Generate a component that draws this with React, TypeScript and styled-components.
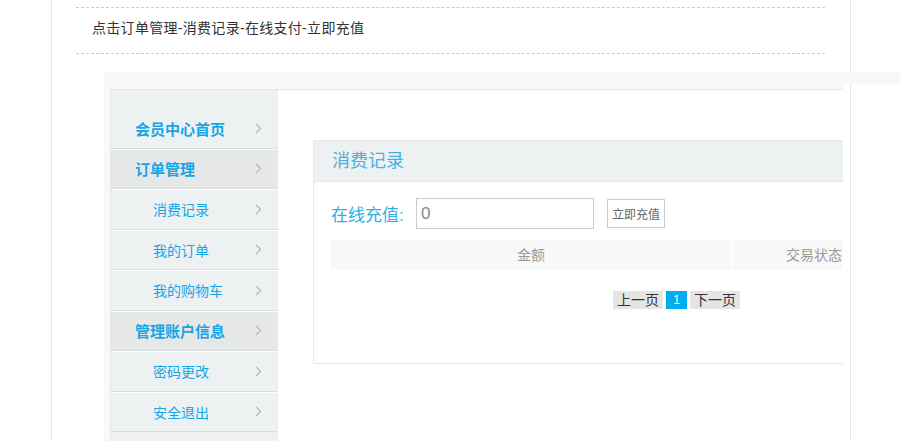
import styled, { createGlobalStyle } from 'styled-components'

const GlobalStyle = createGlobalStyle`
    html, body {
        margin: 0;
        padding: 0;
        overflow: hidden;
        background: #fff;
    }
    body {
        font-family: "Liberation Sans", "Noto Sans CJK SC", sans-serif;
    }
`

const menu = [
    { label: '会员中心首页' },
    { label: '订单管理', group: true },
    { label: '消费记录', sub: true },
    { label: '我的订单', sub: true },
    { label: '我的购物车', sub: true },
    { label: '管理账户信息', group: true },
    { label: '密码更改', sub: true },
    { label: '安全退出', sub: true },
]

function Chevron() {
    return (
        <svg width="7" height="11" viewBox="0 0 7 11">
            <polyline points="1,1 5.5,5.5 1,10" fill="none" stroke="#b9b9b9" strokeWidth="1.3" />
        </svg>
    )
}

export default function App() {
    return (
        <>
            <GlobalStyle />
            <PageSld>
                <TipSld>点击订单管理-消费记录-在线支付-立即充值</TipSld>
                <ShellSld>
                    <BandSld />
                    <BoxSld>
                        <SidebarSld>
                            {menu.map((item) => (
                                <MenuItemSld key={item.label} $sub={item.sub} $group={item.group}>
                                    <span>{item.label}</span>
                                    <Chevron />
                                </MenuItemSld>
                            ))}
                        </SidebarSld>
                        <MainSld>
                            <PanelSld>
                                <PanelHeadSld>消费记录</PanelHeadSld>
                                <PanelBodySld>
                                    <RechargeRowSld>
                                        <LabelSld>在线充值:</LabelSld>
                                        <InputSld defaultValue="0" />
                                        <ButtonSld>立即充值</ButtonSld>
                                    </RechargeRowSld>
                                    <TableHeadSld>
                                        <CellSld>金额</CellSld>
                                        <CellSld>交易状态</CellSld>
                                    </TableHeadSld>
                                    <PagerSld>
                                        <PageBtnSld>上一页</PageBtnSld>
                                        <PageBtnSld $current>1</PageBtnSld>
                                        <PageBtnSld>下一页</PageBtnSld>
                                    </PagerSld>
                                </PanelBodySld>
                            </PanelSld>
                        </MainSld>
                    </BoxSld>
                </ShellSld>
            </PageSld>
        </>
    )
}

const PageSld = styled.div`
    margin-left: 51px;
    width: 800px;
    min-height: 100vh;
    box-sizing: border-box;
    padding-top: 7px;
    border-left: 1px solid #e5e5e5;
    border-right: 1px solid #e5e5e5;
`

const TipSld = styled.div`
    margin: 0 25px 0 24px;
    padding: 10px 16px 15px;
    border-top: 1px dashed #ccc;
    border-bottom: 1px dashed #ccc;
    font-size: 14px;
    letter-spacing: 0.3px;
    line-height: 20px;
    color: #333;
`

const ShellSld = styled.div`
    margin: 18px 0 0 52px;
    width: 739px;
    box-sizing: border-box;
    padding-left: 6px;
    background: #f8f8f8;
`

const BandSld = styled.div`
    margin: 0 0 5px -6px;
    width: 796px;
    height: 12px;
    background: #f8f8f8;
`

const BoxSld = styled.div`
    display: flex;
    width: 733px;
    min-height: 380px;
    box-sizing: border-box;
    overflow: hidden;
    background: #fff;
    border-top: 1px solid #e5e5e5;
    border-left: 1px solid #e5e5e5;
`

const SidebarSld = styled.div`
    flex-shrink: 0;
    width: 167px;
    padding-top: 19px;
    background: #eef1f2;
`

const MenuItemSld = styled.div<{ $sub?: boolean; $group?: boolean }>`
    display: flex;
    align-items: center;
    justify-content: space-between;
    height: 38.5px;
    padding: 0 16px 0 ${(p) => (p.$sub ? 42 : 24)}px;
    font-size: ${(p) => (p.$sub ? 14 : 15)}px;
    font-weight: ${(p) => (p.$sub ? 'normal' : 'bold')};
    color: #14a6e6;
    background: ${(p) => (p.$group ? '#e6e8e8' : 'transparent')};
    border-bottom: 1px solid #d9dcdd;

    & + & {
        border-top: 1px solid #fff;
    }
`

const MainSld = styled.div`
    flex: 1;
    padding: 50px 0 0 35px;
`

const PanelSld = styled.div`
    width: 600px;
    flex-shrink: 0;
    border: 1px solid #e8e8e8;
`

const PanelHeadSld = styled.div`
    height: 40px;
    line-height: 40px;
    padding-left: 18px;
    font-size: 18px;
    color: #45b1e3;
    background: #edf1f2;
    border-bottom: 1px solid #e3e6e7;
`

const PanelBodySld = styled.div`
    padding: 16px 17px 54px;
`

const RechargeRowSld = styled.div`
    display: flex;
    align-items: center;
`

const LabelSld = styled.span`
    width: 85px;
    font-size: 17px;
    color: #33aee6;
`

const InputSld = styled.input`
    width: 178px;
    height: 31px;
    box-sizing: border-box;
    margin: 0;
    padding: 0 4px;
    border: 1px solid #ccc;
    font-family: inherit;
    font-size: 17px;
    color: #888;
    outline: none;
`

const ButtonSld = styled.button`
    margin-left: 13px;
    width: 58px;
    height: 29px;
    padding: 0;
    background: #fff;
    border: 1px solid #ccc;
    font-family: inherit;
    font-size: 12px;
    color: #666;
`

const TableHeadSld = styled.div`
    display: grid;
    grid-template-columns: 400px 162px;
    column-gap: 2px;
    margin-top: 11px;
`

const CellSld = styled.div`
    height: 30px;
    line-height: 30px;
    text-align: center;
    font-size: 14px;
    color: #999;
    background: #f8f8f8;
`

const PagerSld = styled.div`
    display: flex;
    gap: 3px;
    margin-top: 21px;
    padding-left: 282px;
`

const PageBtnSld = styled.span<{ $current?: boolean }>`
    height: 18px;
    line-height: 18px;
    min-width: 21px;
    padding: 0 ${(p) => (p.$current ? 0 : 4)}px;
    text-align: center;
    font-size: ${(p) => (p.$current ? 12 : 14)}px;
    color: ${(p) => (p.$current ? '#fff' : '#333')};
    background: ${(p) => (p.$current ? '#00aeef' : '#e5e5e5')};
`
